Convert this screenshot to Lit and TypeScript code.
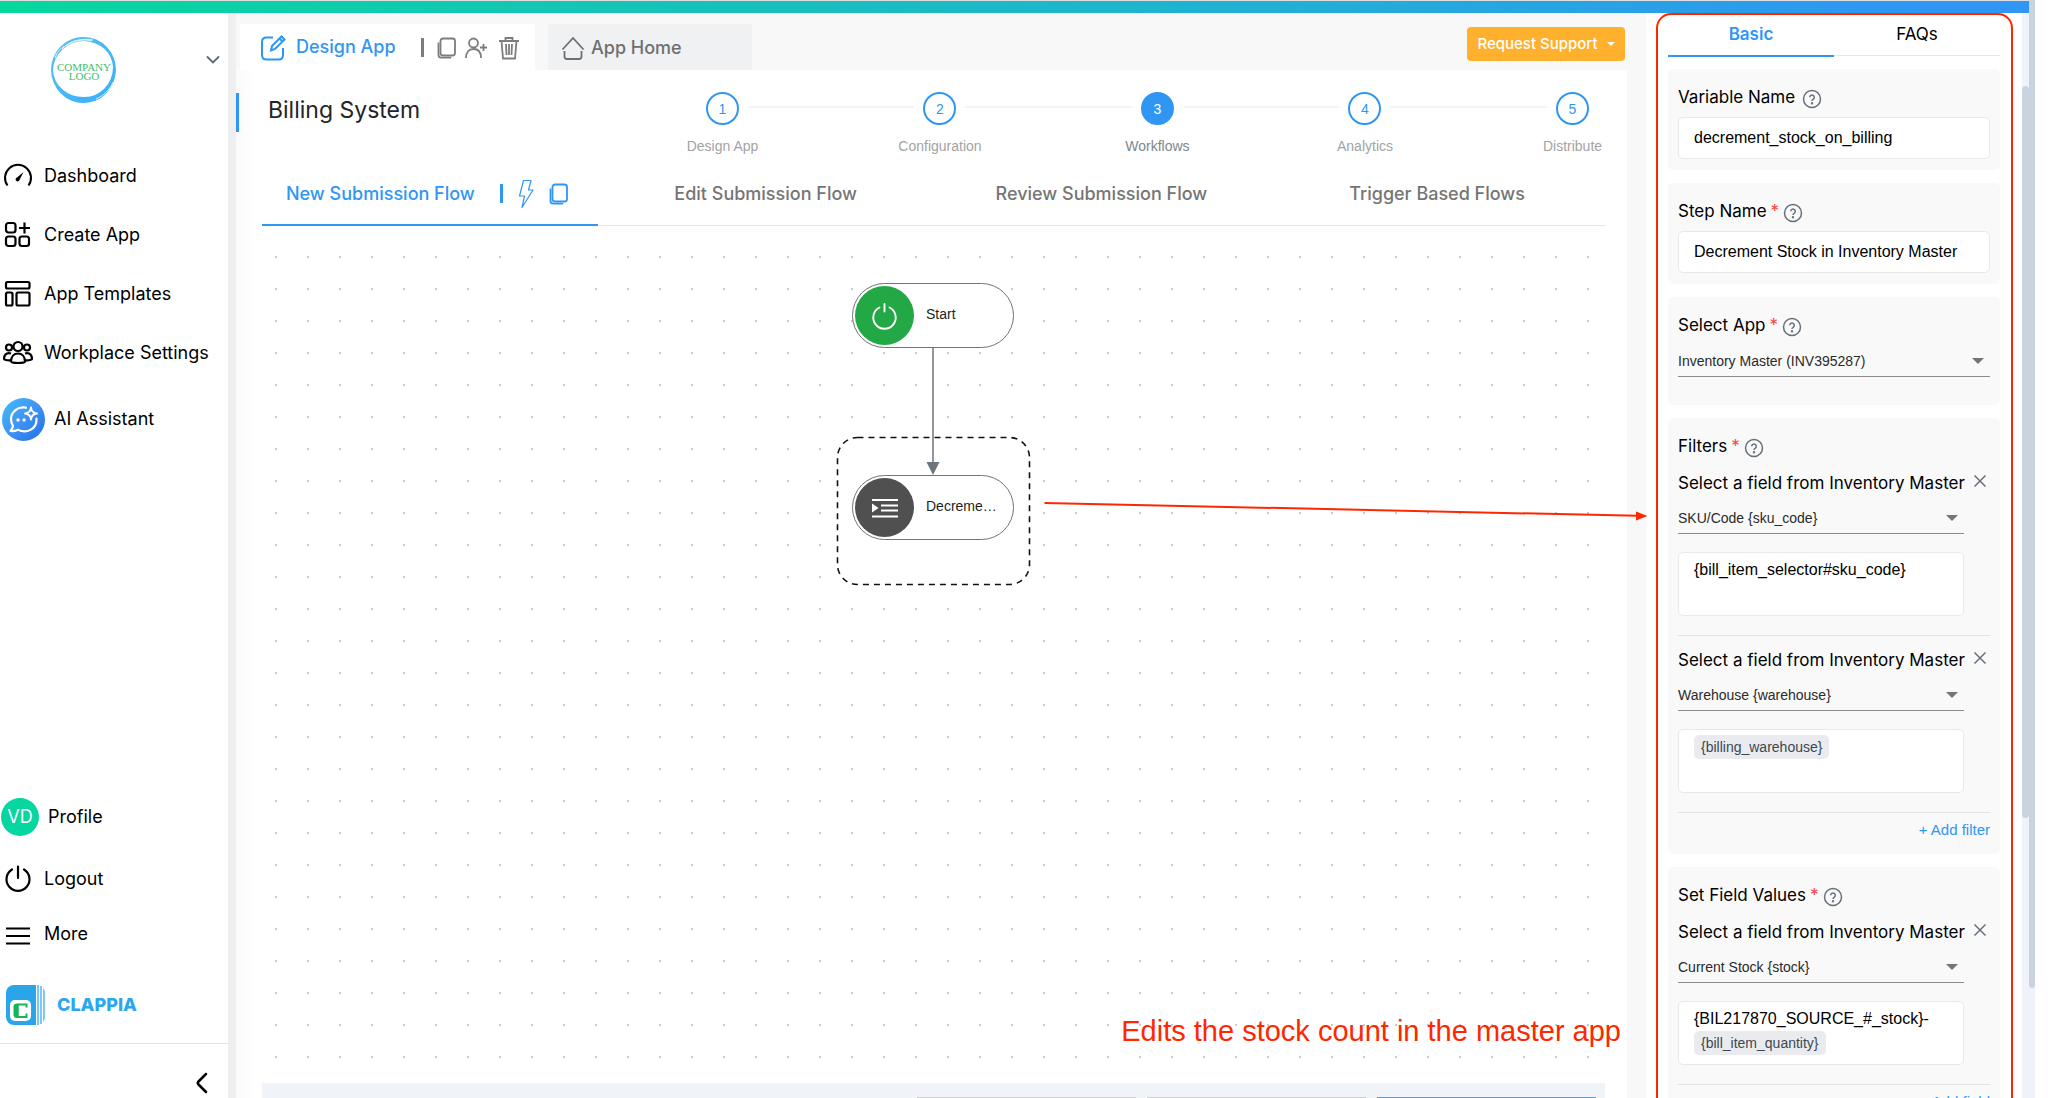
import { LitElement, html, svg, css, nothing } from "lit";
import { customElement } from "lit/decorators.js";
import { classMap } from "lit/directives/class-map.js";

const icons = {
  gauge: svg`<path d="M5.5 25.5A13 13 0 1 1 26.500 25.5" stroke-width="2"/><path d="M21.500 12 17.500 20a2 2 0 1 1-2.500-2.500z" fill="currentColor" stroke="none"/>`,
  create: svg`<rect x="4" y="4" width="9.500" height="9.500" rx="2.500"/><rect x="4" y="17.500" width="9.500" height="9.500" rx="2.500"/><rect x="17.500" y="17.500" width="9.500" height="9.500" rx="2.500"/><path d="M22.500 3.500v11M17 9h11"/>`,
  templates: svg`<rect x="4" y="4" width="23.500" height="6.500" rx="1.500"/><rect x="4" y="14.500" width="6.500" height="13" rx="1.500"/><rect x="14.500" y="14.500" width="13" height="13" rx="1.500"/>`,
  people: svg`<circle cx="16" cy="9.500" r="4.500"/><circle cx="7" cy="10.500" r="3"/><circle cx="25" cy="10.500" r="3"/><path d="M9 24.500c0-5 3-8 7-8s7 3 7 8c0 2-14 2-14 0zM9 16.500c-5-1.500-7 2-7 5.500 0 .8 3 1.500 6.500 1.200M23 16.500c5-1.500 7 2 7 5.500 0 .8-3 1.500-6.500 1.200"/>`,
  power: svg`<path d="M10 6.500a11.500 11.500 0 1 0 12 0M16 3.500v11.500" stroke-linecap="round"/>`,
  more: svg`<path d="M4 10.500h24M4 18h24M4 25.500h24" stroke-width="2"/>`,
};

const icon = (shape: unknown) => html`
  <svg class="icon" viewBox="0 0 32 32" width="32" height="32" aria-hidden="true">${shape}</svg>
`;

const copyIcon = html`
  <svg class="tool" viewBox="0 0 22 24" width="22" height="24" aria-hidden="true">
    <rect x="4.500" y="2.500" width="14.500" height="17" rx="2.500" /><path d="M2.500 6.500v12.500c0 1.800.8 2.700 2.700 2.700h10" />
  </svg>
`;

const helpIcon = html`
  <button class="help" type="button" aria-label="Help">
    <svg viewBox="0 0 20 20" width="20" height="20" aria-hidden="true">
      <circle cx="10" cy="10" r="8.500" /><path d="M7.700 8.300a2.300 2.300 0 1 1 3.500 2c-.8.500-1.200.9-1.200 1.700" /><circle cx="10" cy="14.200" r=".5" />
    </svg>
  </button>
`;

const closeIcon = html`
  <button class="close" type="button" aria-label="Remove">
    <svg viewBox="0 0 14 14" width="14" height="14" aria-hidden="true"><path d="M1.500 1.500l11 11M12.500 1.500l-11 11" /></svg>
  </button>
`;

@customElement("app-sidebar")
export class AppSidebar extends LitElement {
  static styles = css`
    :host { display: flex; flex-direction: column; background: #fff; color: #000; font: 18px/24px Inter, "Liberation Sans", sans-serif; }
    .brand { display: flex; justify-content: space-between; height: 133px; padding: 23px 8px 0 50px; box-sizing: border-box; flex: none; }
    .plain { background: none; border: 0; padding: 0; font: inherit; color: inherit; }
    .switch { align-self: flex-start; display: flex; margin-top: 18px; }
    .nav { display: flex; flex-direction: column; }
    .grow { flex: 1; }
    .item { display: flex; align-items: center; gap: 10px; height: 59px; padding-left: 2px; color: inherit; text-decoration: none; flex: none; }
    .icon { fill: none; stroke: currentColor; stroke-width: 2.200; flex: none; }
    .assistant { height: 74px; gap: 9px; }
    .profile { height: 66px; gap: 9px; padding-left: 1px; }
    .logout { height: 57px; }
    .more { height: 54px; }
    .avatar { width: 38px; height: 38px; border-radius: 50%; background: #06d6a0; color: #fff; text-align: center; line-height: 38px; }
    .clappia { height: 76px; margin-top: 6px; padding-left: 6px; gap: 11px; color: #2aa7ee; font-weight: 800; }
    .foot { display: flex; justify-content: flex-end; align-items: flex-end; height: 55px; padding: 0 18px 4px 0; border-top: 1px solid #e3e3e3; box-sizing: border-box; flex: none; }
    .collapse { display: block; }
    .collapse svg { display: block; }
  `;

  private item(shape: unknown, label: string, kind = "") {
    return html`<a class="item ${kind}" href="#">${icon(shape)}<span>${label}</span></a>`;
  }

  render() {
    return html`
      <div class="brand">
        <svg viewBox="0 0 68 68" width="68" height="68" role="img" aria-label="Company logo">
          <defs><linearGradient id="ring" x1="0" y1="0" x2="1" y2="1"><stop offset="0" stop-color="#57bfe8" /><stop offset="1" stop-color="#38b0ff" /></linearGradient></defs>
          <path fill="url(#ring)" fill-rule="evenodd" d="M34 1A32 33 0 0 1 66 34 32 34 0 0 1 34 67 32 34 0 0 1 1 34 32 33 0 0 1 34 1zM34 5A31 30 0 0 0 3 34 30 28 0 0 0 34 61 28 30 0 0 0 63 31 30 27 0 0 0 34 5z" />
          <path fill="none" stroke="#fff" stroke-width=".8" d="M12 13C20 4 32 2 43 4M16 10C24 4 34 3 42 5M5 22C7 16 10 13 14 10M63 46C60 54 53 60 46 63" />
          <text x="34" y="35" text-anchor="middle" font-family="Liberation Serif, serif" font-size="11" fill="#3fc06c">COMPANY</text>
          <text x="34" y="44" text-anchor="middle" font-family="Liberation Serif, serif" font-size="11" fill="#3fc06c">LOGO</text>
        </svg>
        <button class="plain switch" type="button" aria-label="Switch workplace">
          <svg viewBox="0 0 14 12" width="14" height="12"><path d="M1.500 3 7 8.500 12.500 3" fill="none" stroke="#5d6873" stroke-width="1.800" stroke-linecap="round" /></svg>
        </button>
      </div>
      <nav class="nav grow">
        ${this.item(icons.gauge, "Dashboard")} ${this.item(icons.create, "Create App")}
        ${this.item(icons.templates, "App Templates")} ${this.item(icons.people, "Workplace Settings")}
        <a class="item assistant" href="#">
          <svg viewBox="0 0 43 43" width="43" height="43" aria-hidden="true">
            <defs><linearGradient id="ai" x1="0" y1="0" x2="1" y2="1"><stop offset="0" stop-color="#42bdfa" /><stop offset=".5" stop-color="#4093f3" /><stop offset="1" stop-color="#1f6fe8" /></linearGradient></defs>
            <circle cx="21.500" cy="21.500" r="21.500" fill="url(#ai)" />
            <path d="M24 9.700c-8-1.600-15 4-15 11.300 0 3 1 5.500 2 7-.3 2-1.300 3.500-2.500 5 3 .5 5.500-.3 7.500-1.300 9 4.500 19-1 18.500-11" fill="none" stroke="#fff" stroke-width="2.200" stroke-linecap="round" stroke-linejoin="round" />
            <path d="M29 9.500Q29.500 15 35 15.500 29.500 16 29 21.500 28.500 16 23 15.500 28.500 15 29 9.500z" fill="none" stroke="#fff" stroke-width="2" stroke-linejoin="round" />
            <circle cx="16" cy="22" r="1.700" fill="#fff" /><circle cx="22" cy="22" r="1.700" fill="#fff" />
          </svg>
          <span>AI Assistant</span>
        </a>
      </nav>
      <nav class="nav">
        <a class="item profile" href="#"><span class="avatar">VD</span><span>Profile</span></a>
        ${this.item(icons.power, "Logout", "logout")} ${this.item(icons.more, "More", "more")}
        <a class="item clappia" href="#">
          <svg viewBox="0 0 40 40" width="40" height="40" aria-hidden="true">
            <path d="M8 0h22v40H8a8 8 0 0 1-8-8V8a8 8 0 0 1 8-8z" fill="#2aa5ea" />
            <path d="M31 0h2v40h-2zM34 1h2v38h-2zM37 3l2 3v28l-2 3z" fill="#7cc8f5" />
            <rect x="4" y="15" width="21" height="21" rx="5" fill="#fff" />
            <path d="M20.500 22.500v-3h-10l-2 1.500v9l2 2h10v-3.500" fill="none" stroke="#16b35c" stroke-width="2" /><path d="M10.500 19v13.500" stroke="#16b35c" stroke-width="4.500" />
          </svg>
          <span>CLAPPIA</span>
        </a>
      </nav>
      <div class="foot">
        <button class="plain collapse" type="button" aria-label="Collapse menu">
          <svg viewBox="0 0 16 22" width="16" height="22"><path d="M12 2 4.500 9.500q-1.500 1.500 0 3L12 20" fill="none" stroke="#000" stroke-width="2.500" stroke-linecap="round" /></svg>
        </button>
      </div>
    `;
  }
}

@customElement("flow-canvas")
export class FlowCanvas extends LitElement {
  static styles = css`
    :host { display: block; position: relative; background: conic-gradient(from 90deg at 30px 30px, #cacaca 25%, transparent 0) -17px 0 / 32px 32px; font-family: "Liberation Sans", Arial, sans-serif; }
    .edges { position: absolute; left: 0; top: 0; overflow: visible; }
    .node { position: absolute; left: 590px; display: flex; align-items: center; gap: 12px; width: 162px; height: 65px; box-sizing: border-box; border: 1px solid #6c757d; border-radius: 33px; background: #fff; padding: 0 10px 0 2px; font: 14px/20px "Liberation Sans", Arial, sans-serif; color: #1d1f22; text-align: left; }
    .start { top: 57px; }
    .step { top: 249px; }
    .disc { width: 59px; height: 59px; border-radius: 50%; background: #505050; flex: none; }
    .go { background: #22a845; }
    .disc svg { display: block; }
    .label { white-space: nowrap; padding-bottom: 3px; }
    .note { position: absolute; right: -16px; bottom: 35px; margin: 0; font-size: 29px; line-height: 34px; color: #ff2600; white-space: nowrap; }
  `;

  render() {
    return html`
      <svg class="edges" width="1343" height="857" aria-hidden="true">
        <rect x="575.500" y="211.500" width="192" height="147" rx="20" fill="#fff" stroke="#111" stroke-width="1.600" stroke-dasharray="6 5" />
        <path d="M671 122v120" stroke="#6c757d" stroke-width="1.500" />
        <path d="M664.500 236h13l-6.500 13z" fill="#6c757d" />
      </svg>
      <button class="node start" type="button">
        <span class="disc go"><svg viewBox="0 0 59 59" width="59" height="59"><path d="M24.500 21.500a11.200 11.200 0 1 0 10 0M29.500 18v7.500" fill="none" stroke="#fff" stroke-width="1.900" stroke-linecap="round" /></svg></span>
        <span class="label">Start</span>
      </button>
      <button class="node step" type="button">
        <span class="disc"><svg viewBox="0 0 59 59" width="59" height="59"><path d="M17 22h26M26 27.500h17M26 32.500h17M17 38.500h26" stroke="#fff" stroke-width="2" /><path d="M17 25.500 23.500 30 17 34.500z" fill="#fff" /></svg></span>
        <span class="label">Decreme…</span>
      </button>
      <svg class="edges" width="1" height="1" aria-hidden="true">
        <path d="M782.500 277 1376 289.800" stroke="#ff2600" stroke-width="2" /><path d="M1374 285.500 1385.500 290 1374 294.500z" fill="#ff2600" />
      </svg>
      <p class="note">Edits the stock count in the master app</p>
    `;
  }
}

interface FieldRow { id: string; option: string; text?: string; chip?: string }

@customElement("step-panel")
export class StepPanel extends LitElement {
  static styles = css`
    :host { display: block; position: relative; overflow: hidden; background: #fff; padding: 0 29px 0 22px; box-sizing: border-box; color: #000; font: 17px/24px Inter, "Liberation Sans", sans-serif; }
    .tabs { display: flex; height: 44px; margin-bottom: 12px; }
    .tab { flex: 1; background: none; border: 0; border-bottom: 1px solid #e8e8e8; font: inherit; color: #000; padding: 0 0 1px; height: 43px; }
    .active { color: #2f96f4; font-weight: 600; border-bottom: 2px solid #2f96f4; height: 44px; }
    .card { background: #f9f9f9; border-radius: 5px; padding: 16px 10px 11px; margin-bottom: 13px; }
    .head { display: flex; align-items: center; height: 24px; margin-bottom: 8px; }
    .star { color: #f4433c; margin-left: 4px; }
    .none { width: 3px; }
    .help { margin: 4px 0 0 4px; padding: 0; border: 0; background: none; display: flex; }
    .help svg, .close svg { fill: none; stroke: #67707a; stroke-width: 1.500; display: block; }
    .box { box-sizing: border-box; display: block; width: 100%; border: 1px solid #e9e9e9; border-radius: 5px; background: #fff; color: #000; font: 16px/24px "Liberation Sans", Arial, sans-serif; padding: 0 15px; margin: 0; outline: 0; resize: none; }
    .line { height: 42px; }
    .area { height: 64px; padding-top: 5px; width: auto; overflow: hidden; }
    .chip { display: inline-block; font-size: 14px; line-height: 24px; padding: 0 7px; background: #e9ebef; border-radius: 5px; color: #3c4852; vertical-align: top; }
    .pick { position: relative; display: block; border-bottom: 1px solid #8c8c8c; }
    .pick::after { content: ""; position: absolute; right: 6px; top: 13px; border: 6px solid transparent; border-top-color: #757575; border-bottom: 0; pointer-events: none; }
    .select { appearance: none; display: block; width: 100%; height: 31px; border: 0; padding: 0; background: none; font: 14px/30px "Liberation Sans", Arial, sans-serif; color: #2a2a2a; }
    .tall { padding-bottom: 28px; }
    .filters { padding-bottom: 12px; }
    .row { display: grid; grid-template-columns: minmax(0, 1fr) 26px; row-gap: 7px; border-bottom: 1px solid #e2e2e2; padding-bottom: 19px; margin-bottom: 7px; }
    .name { white-space: nowrap; padding-top: 5px; }
    .area-wrap { padding-top: 11px; display: grid; }
    .close { border: 0; background: none; padding: 8px 0 0 9px; align-self: start; }
    .add { display: block; margin: 0 0 0 auto; border: 0; background: none; padding: 0; color: #2f96f4; font: 15px/24px "Liberation Sans", Arial, sans-serif; }
    .last { margin-bottom: 5px; }
    .frame { position: absolute; left: 10px; right: 16px; top: 0; bottom: -30px; border: 2px solid #ff2600; border-radius: 15px; pointer-events: none; }
    .track { position: absolute; right: 0; top: 0; bottom: 0; width: 7px; background: #eff3f9; }
    .thumb { height: 732px; margin-top: 73px; border-radius: 4px; background: #cad4e1; }
  `;

  private head(label: string, required = true, forId?: string) {
    return html`<div class="head">
      ${forId ? html`<label for=${forId}>${label}</label>` : html`<span>${label}</span>`}
      <span class=${required ? "star" : "none"}>${required ? "*" : ""}</span>${helpIcon}
    </div>`;
  }

  private select(id: string, option: string) {
    return html`<span class="pick"><select class="select" id=${id}><option>${option}</option></select></span>`;
  }

  private field(row: FieldRow, last = false) {
    return html`<div class=${classMap({ row: true, last })}>
      <label class="name" for=${row.id}>Select a field from Inventory Master</label>${closeIcon}
      ${this.select(row.id, row.option)}<span></span>
      <div class="area-wrap">
        ${row.chip
          ? html`<div class="box area" role="textbox" contenteditable="true" aria-label="Value">${row.text ?? nothing}<span class="chip">${row.chip}</span></div>`
          : html`<textarea class="box area" aria-label="Value" .value=${row.text ?? ""}></textarea>`}
      </div>
    </div>`;
  }

  render() {
    return html`
      <div class="tabs" role="tablist">
        <button class="tab active" role="tab" aria-selected="true">Basic</button>
        <button class="tab" role="tab" aria-selected="false">FAQs</button>
      </div>
      <section class="card">${this.head("Variable Name", false, "variable")}
        <input class="box line" id="variable" .value=${"decrement_stock_on_billing"} /></section>
      <section class="card">${this.head("Step Name", true, "step")}
        <input class="box line" id="step" .value=${"Decrement Stock in Inventory Master"} /></section>
      <section class="card tall">${this.head("Select App", true, "app")}${this.select("app", "Inventory Master (INV395287)")}</section>
      <section class="card filters">${this.head("Filters")}
        ${this.field({ id: "sku", option: "SKU/Code {sku_code}", text: "{bill_item_selector#sku_code}" })}
        ${this.field({ id: "warehouse", option: "Warehouse {warehouse}", chip: "{billing_warehouse}" }, true)}
        <button class="add" type="button">+ Add filter</button></section>
      <section class="card">${this.head("Set Field Values")}
        ${this.field({ id: "stock", option: "Current Stock {stock}", text: "{BIL217870_SOURCE_#_stock}-", chip: "{bill_item_quantity}" }, true)}
        <button class="add" type="button">+ Add field</button></section>
      <div class="frame"></div>
      <div class="track"><div class="thumb"></div></div>
    `;
  }
}

@customElement("app-root")
export class AppRoot extends LitElement {
  static styles = css`
    :host { display: flex; height: 100vh; overflow: hidden; background: #fff; padding-right: 13px; box-sizing: border-box; font: 18px/24px Inter, "Liberation Sans", sans-serif; }
    .app { flex: 1; min-width: 0; display: flex; flex-direction: column; }
    .bar { flex: none; height: 12px; border-top: 1px solid #dedede; background: linear-gradient(90deg, #07d79d, #1eb5cd 55%, #2f96f5 95%); }
    .body { flex: 1; min-height: 0; display: flex; }
    .side { flex: 0 0 228px; border-right: 8px solid #efefef; }
    .main { flex: 1; min-width: 0; display: flex; flex-direction: column; background: #f8f8f8; padding-right: 19px; position: relative; z-index: 1; }
    .panel { flex: 0 0 383px; }
    .top { flex: none; display: flex; height: 57px; padding-left: 4px; align-items: flex-end; box-sizing: border-box; }
    .tab { height: 46px; display: flex; align-items: center; box-sizing: border-box; padding-top: 1px; }
    .design { width: 295px; background: #fff; padding-left: 20px; color: #2f96f4; }
    .home { width: 204px; margin-left: 13px; background: #f0f1f3; padding-left: 13px; gap: 6px; color: #6f6f6f; font-weight: 500; text-decoration: none; }
    .link { color: inherit; font-weight: 500; text-decoration: none; display: flex; gap: 10px; }
    .tools { display: flex; align-items: center; color: #7d7d7d; gap: 6px; margin-left: 25px; }
    .split { width: 3px; height: 19px; background: currentColor; margin-right: 6px; }
    .act { border: 0; background: none; padding: 0; color: inherit; display: flex; }
    .bin { margin-left: 4px; }
    .tool { fill: none; stroke: currentColor; stroke-width: 1.800; flex: none; display: block; }
    .support { margin: 0 2px 9px auto; min-width: 158px; justify-content: center; height: 34px; border: 0; border-radius: 4px; background: #ffb02c; color: #fff; font: 500 15px/24px Inter, sans-serif; padding: 0 10px; display: flex; align-items: center; gap: 9px; }
    .caret { border: 4px solid transparent; border-top-color: #fff; border-bottom: 0; }
    .content { flex: 1; min-height: 0; background: linear-gradient(90deg, #fafafa, #fff 18px); display: flex; flex-direction: column; }
    .titles { flex: none; display: flex; justify-content: space-between; height: 93px; padding: 22px 38px 0 0; box-sizing: border-box; }
    .title { margin: 1px 0 0; height: 39px; border-left: 3px solid #2f96f4; padding-left: 29px; font-size: 23px; line-height: 34px; font-weight: 400; color: #212529; white-space: nowrap; }
    .steps { flex: 0 1 883px; display: flex; margin: 0; padding: 0; list-style: none; }
    .step { width: 33px; display: flex; flex-direction: column; align-items: center; gap: 12px; color: #a3a3a3; font: 14px/18px "Liberation Sans", Arial, sans-serif; white-space: nowrap; }
    .num { width: 33px; height: 33px; box-sizing: border-box; border: 2px solid #2f96f4; border-radius: 50%; text-align: center; color: #2f96f4; line-height: 30px; flex: none; }
    .current { color: #7d8790; }
    .current .num { background: #2f96f4; color: #fff; }
    .rail { flex: 157; height: 2px; background: #f4f4f4; margin: 14px 9px 0; }
    .long { flex: 167; }
    .flows { flex: none; display: grid; grid-template-columns: repeat(4, minmax(0, 1fr)); height: 63px; margin: 0 22px 0 26px; }
    .flow { display: flex; align-items: center; justify-content: center; border: 0; border-bottom: 1px solid #e8e8e8; background: none; padding: 0; color: #757575; font: 500 18px/24px Inter, sans-serif; white-space: nowrap; }
    .on { color: #2f96f4; border-bottom: 2px solid #2f96f4; padding-right: 4px; }
    .on .split { margin: 0 15px 0 25px; }
    .on .bolt { margin-right: 14px; }
    .canvas { flex: 1; margin: 0 22px 0 26px; }
    .actions { flex: none; height: 15px; box-sizing: border-box; overflow: hidden; margin: 0 22px 0 26px; background: #f0f3f8; padding: 14px 9px 0; display: flex; justify-content: flex-end; gap: 11px; }
    .ghost { width: 219px; height: 40px; flex: none; border: 1px solid #cfcfcf; background: #fff; padding: 0; }
    .primary { border-color: #4a9ff0; background: #2f96f4; }
    .scroll { flex: 0 0 6px; background: #eff3f9; }
    .grip { height: 90%; background: #cad4e1; border-radius: 0 0 4px 4px; }
  `;

  private steps = ["Design App", "Configuration", "Workflows", "Analytics", "Distribute"];

  render() {
    return html`
      <div class="app">
        <div class="bar"></div>
        <div class="body">
          <app-sidebar class="side"></app-sidebar>
          <main class="main">
            <header class="top">
              <div class="tab design">
                <a class="link" href="#">
                  <svg class="tool" viewBox="0 0 26 26" width="26" height="26" aria-hidden="true"><path d="M13 2.500H6.500c-3 0-4.500 1.500-4.500 4.500V20c0 3 1.500 4.500 4.500 4.500h12c3 0 4.500-1.500 4.500-4.500v-7M11 15.500l1-4.500 9.500-9.500 3 3L15 14zM19.500 3.500l3 3" stroke-width="2" /></svg>
                  <span>Design App</span>
                </a>
                <div class="tools">
                  <span class="split"></span>
                  <button class="act" type="button" aria-label="Duplicate">${copyIcon}</button>
                  <button class="act" type="button" aria-label="Add user">
                    <svg class="tool" viewBox="0 0 24 24" width="24" height="24"><circle cx="9.500" cy="7" r="4.500" /><path d="M2 22c0-6 3-9 7.500-9s7.500 3 7.500 9M16 11.500h7M19.500 8v7" /></svg>
                  </button>
                  <button class="act bin" type="button" aria-label="Delete">
                    <svg class="tool" viewBox="0 0 22 24" width="22" height="24"><path d="M1 5h20M7.500 5V2h7v3M3.500 5l1.500 17.500h12L18.500 5M8 8l.5 11M11 8v11M14 8l-.5 11" /></svg>
                  </button>
                </div>
              </div>
              <a class="tab home" href="#">
                <svg class="tool" viewBox="0 0 24 26" width="24" height="26" aria-hidden="true"><path d="M1.500 14.500 12 3l10.500 11.500M3.500 16v5.500c0 1.700 1 2.500 2.500 2.500h12c1.500 0 2.500-.8 2.500-2.500V16" /></svg>
                <span>App Home</span>
              </a>
              <button class="support" type="button">Request Support <span class="caret"></span></button>
            </header>
            <div class="content">
              <div class="titles">
                <h1 class="title">Billing System</h1>
                <ol class="steps">
                  ${this.steps.map(
                    (name, i) => html`${i ? html`<li class=${classMap({ rail: true, long: i < 3 })} role="presentation"></li>` : nothing}
                      <li class=${classMap({ step: true, current: i === 2 })}><span class="num">${i + 1}</span><span>${name}</span></li>`
                  )}
                </ol>
              </div>
              <div class="flows" role="tablist">
                <button class="flow on" role="tab" aria-selected="true">
                  New Submission Flow<span class="split"></span>
                  <svg class="tool bolt" viewBox="0 0 16 30" width="16" height="30" aria-hidden="true"><path d="M5.500 1.500h7.500L10.500 11h4.500L4 28.500 6.500 17H1.500z" stroke-width="1.200" stroke-linejoin="round" /></svg>
                  ${copyIcon}
                </button>
                <button class="flow" role="tab">Edit Submission Flow</button>
                <button class="flow" role="tab">Review Submission Flow</button>
                <button class="flow" role="tab">Trigger Based Flows</button>
              </div>
              <flow-canvas class="canvas"></flow-canvas>
              <div class="actions">
                <button class="ghost" type="button" aria-label="Cancel"></button>
                <button class="ghost" type="button" aria-label="Preview"></button>
                <button class="ghost primary" type="button" aria-label="Save"></button>
              </div>
            </div>
          </main>
          <step-panel class="panel"></step-panel>
        </div>
      </div>
      <div class="scroll"><div class="grip"></div></div>
    `;
  }
}
